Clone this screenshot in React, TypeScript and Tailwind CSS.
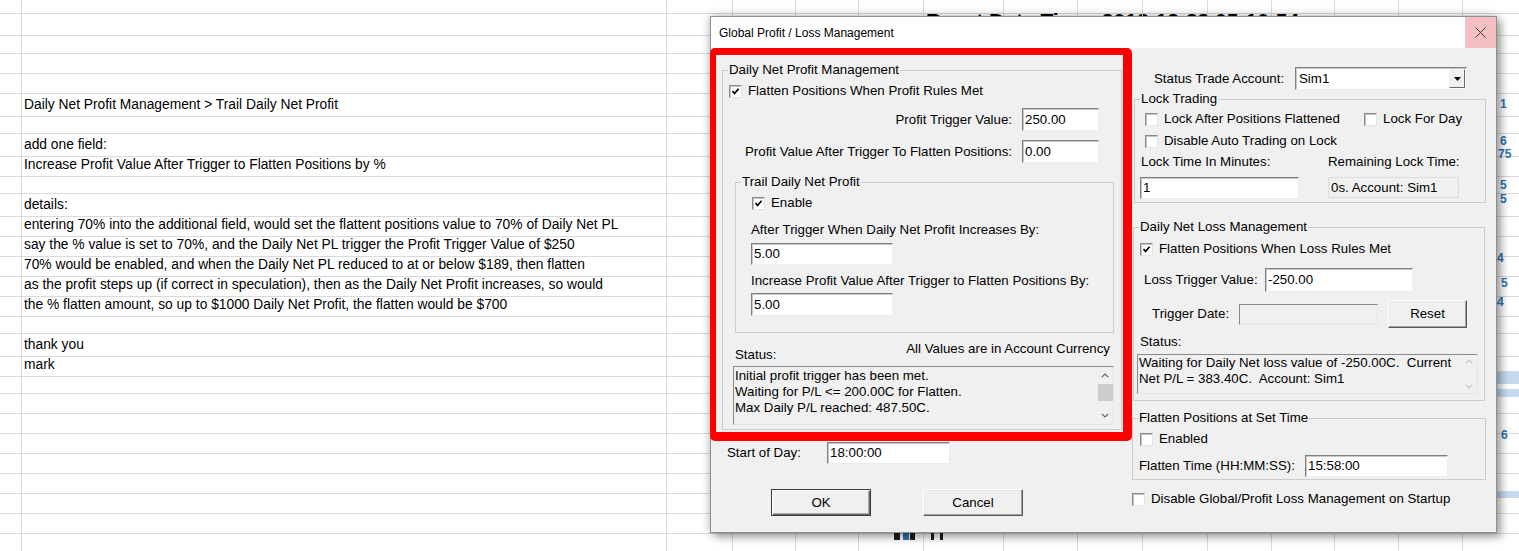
import React from 'react';

const sheetRows: Record<number, string> = {
  5: 'Daily Net Profit Management > Trail Daily Net Profit',
  7: 'add one field:',
  8: 'Increase Profit Value After Trigger to Flatten Positions by %',
  10: 'details:',
  11: 'entering 70% into the additional field, would set the flattent positions value to 70% of Daily Net PL',
  12: 'say the % value is set to 70%, and the Daily Net PL trigger the Profit Trigger Value of $250',
  13: '70% would be enabled, and when the Daily Net PL reduced to at or below $189, then flatten',
  14: 'as the profit steps up (if correct in speculation), then as the Daily Net Profit increases, so would',
  15: 'the % flatten amount, so up to $1000 Daily Net Profit, the flatten would be $700',
  17: 'thank you',
  18: 'mark',
};

// fragments of the window peeking out at the right edge
const edgeNumbers = [
  { top: 'top-[96px]', left: 'left-[1500px]', text: '1' },
  { top: 'top-[133px]', left: 'left-[1500px]', text: '6' },
  { top: 'top-[146px]', left: 'left-[1498px]', text: '75' },
  { top: 'top-[177px]', left: 'left-[1500px]', text: '5' },
  { top: 'top-[191px]', left: 'left-[1500px]', text: '5' },
  { top: 'top-[250px]', left: 'left-[1497px]', text: '4' },
  { top: 'top-[275px]', left: 'left-[1501px]', text: '5' },
  { top: 'top-[294px]', left: 'left-[1497px]', text: '4' },
  { top: 'top-[427px]', left: 'left-[1501px]', text: '6' },
];

function Check({ checked }: { checked?: boolean }) {
  return (
    <span className="inline-flex h-[13px] w-[13px] shrink-0 items-center justify-center border border-t-[#8a8a8a] border-l-[#8a8a8a] border-b-[#e4e4e4] border-r-[#e4e4e4] bg-white shadow-[inset_1px_1px_0_#c4c4c4]">
      {checked && (
        <svg width="9" height="9" viewBox="0 0 9 9">
          <path d="M1.5 4.2 L3.6 6.4 L7.6 1.8" stroke="#000" strokeWidth="1.7" fill="none" />
        </svg>
      )}
    </span>
  );
}

function CheckRow({ checked, label, className = '' }: { checked?: boolean; label: string; className?: string }) {
  return (
    <div className={'flex h-[16px] items-center gap-[6px] ' + className}>
      <Check checked={checked} />
      <span className="leading-[16px] whitespace-nowrap">{label}</span>
    </div>
  );
}

function Field({ value, className = '' }: { value: string; className?: string }) {
  return (
    <div className={'flex items-center border border-t-[#7f7f7f] border-l-[#7f7f7f] border-b-[#ececec] border-r-[#ececec] bg-white pl-[2px] leading-[16px] shadow-[inset_1px_1px_0_#c8c8c8] ' + className}>
      {value}
    </div>
  );
}

function GroupBox({ title, className = '', children }: { title: string; className?: string; children: React.ReactNode }) {
  return (
    <div className={'relative border border-[#cdcdcd] ' + className}>
      <span className="absolute -top-[9px] left-[5px] bg-[#f0f0f0] px-[1px] leading-[16px] whitespace-nowrap">{title}</span>
      {children}
    </div>
  );
}

function Button({ label, isDefault, className = '' }: { label: string; isDefault?: boolean; className?: string }) {
  const look = isDefault
    ? 'border border-[#3c3c3c] shadow-[inset_1px_1px_0_#ffffff,inset_-1px_-1px_0_#696969,inset_-2px_-2px_0_#a8a8a8]'
    : 'border border-t-[#ffffff] border-l-[#ffffff] border-b-[#5a5a5a] border-r-[#5a5a5a] shadow-[inset_-1px_-1px_0_#a0a0a0,inset_1px_1px_0_#e8e8e8]';
  return (
    <div className={'flex items-center justify-center bg-[#f0f0f0] ' + look + ' ' + className}>{label}</div>
  );
}

function Chevron({ up, color }: { up?: boolean; color: string }) {
  return (
    <svg width="8" height="5" viewBox="0 0 8 5">
      <path d={up ? 'M0.8 4.2 L4 1 L7.2 4.2' : 'M0.8 0.8 L4 4 L7.2 0.8'} stroke={color} strokeWidth="1.2" fill="none" />
    </svg>
  );
}

function Dialog() {
  return (
    <div className="absolute left-[710px] top-[16px] h-[517px] w-[787px] border border-[#8f8f8f] bg-white font-['Liberation_Sans',Arial,sans-serif] text-[13.3px] text-black shadow-[0_0_9px_rgba(0,0,0,0.3),5px_5px_8px_rgba(0,0,0,0.25)]">
      {/* Title bar */}
      <div className="flex h-[31px] items-center justify-between bg-white">
        <span className="pl-[8px] text-[12px]">Global Profit / Loss Management</span>
        <div className="flex h-[31px] w-[31px] items-center justify-center bg-[#f3bfc0]">
          <svg width="11" height="11" viewBox="0 0 11 11">
            <path d="M0.5 0.5 L10.5 10.5 M10.5 0.5 L0.5 10.5" stroke="#3a3a3a" strokeWidth="1" />
          </svg>
        </div>
      </div>

      <div className="flex h-[484px] bg-[#f0f0f0]">
        {/* Left column */}
        <div className="w-[420px] shrink-0">
          <GroupBox title="Daily Net Profit Management" className="ml-[11px] mt-[22px] w-[400px] pb-[4px]">
            <CheckRow checked label="Flatten Positions When Profit Rules Met" className="mt-[12px] pl-[6px]" />
            <div className="mt-[9px] flex items-center justify-end gap-[10px] pr-[22px]">
              <span>Profit Trigger Value:</span>
              <Field value="250.00" className="h-[23px] w-[77px]" />
            </div>
            <div className="mt-[9px] flex items-center justify-end gap-[10px] pr-[22px]">
              <span>Profit Value After Trigger To Flatten Positions:</span>
              <Field value="0.00" className="h-[23px] w-[77px]" />
            </div>

            <GroupBox title="Trail Daily Net Profit" className="ml-[12px] mt-[19px] h-[151px] w-[379px]">
              <CheckRow checked label="Enable" className="mt-[12px] pl-[16px]" />
              <div className="mt-[11px] pl-[15px] leading-[16px]">After Trigger When Daily Net Profit Increases By:</div>
              <Field value="5.00" className="ml-[15px] mt-[5px] h-[22px] w-[142px]" />
              <div className="mt-[8px] pl-[15px] leading-[16px]">Increase Profit Value After Trigger to Flatten Positions By:</div>
              <Field value="5.00" className="ml-[15px] mt-[4px] h-[23px] w-[142px]" />
            </GroupBox>

            <div className="mt-[8px] flex h-[22px] items-end justify-between pl-[12px] pr-[11px] leading-[16px]">
              <span>Status:</span>
              <span className="mb-[6px]">All Values are in Account Currency</span>
            </div>
            <div className="ml-[10px] mt-[3px] flex h-[59px] w-[381px] border border-t-[#8a8a8a] border-l-[#8a8a8a] border-b-[#e6e6e6] border-r-[#e6e6e6] bg-[#f0f0f0]">
              <div className="flex-1 pl-[1px] pt-[1px] leading-[16px]">
                <div>Initial profit trigger has been met.</div>
                <div>Waiting for P/L &lt;= 200.00C for Flatten.</div>
                <div>Max Daily P/L reached: 487.50C.</div>
              </div>
              <div className="flex w-[16px] flex-col items-center bg-[#f0f0f0]">
                <div className="flex h-[17px] items-center"><Chevron up color="#606060" /></div>
                <div className="h-[17px] w-[15px] bg-[#cdcdcd]" />
                <div className="flex-1" />
                <div className="flex h-[17px] items-center"><Chevron color="#606060" /></div>
              </div>
            </div>
          </GroupBox>

          <div className="mt-[12px] flex h-[22px] items-center pl-[16px]">
            <span className="w-[100px]">Start of Day:</span>
            <Field value="18:00:00" className="h-[22px] w-[123px]" />
          </div>
          <div className="mt-[25px] flex gap-[52px] pl-[60px]">
            <Button label="OK" isDefault className="h-[27px] w-[100px]" />
            <Button label="Cancel" className="h-[27px] w-[100px]" />
          </div>
        </div>

        {/* Right column */}
        <div className="flex-1">
          <div className="mt-[19px] flex h-[23px] items-center pl-[23px]">
            <span className="w-[141px]">Status Trade Account:</span>
            <div className="flex h-[23px] w-[172px] items-center border border-t-[#7f7f7f] border-l-[#7f7f7f] border-b-[#ececec] border-r-[#ececec] bg-white pl-[3px] shadow-[inset_1px_1px_0_#c8c8c8]">
              <span className="flex-1">Sim1</span>
              <div className="mr-[1px] flex h-[19px] w-[16px] items-center justify-center border border-t-[#f4f4f4] border-l-[#f4f4f4] border-b-[#696969] border-r-[#696969] bg-[#f0f0f0]">
                <svg width="7" height="4" viewBox="0 0 7 4"><path d="M0 0 H7 L3.5 4 Z" fill="#000" /></svg>
              </div>
            </div>
          </div>

          <GroupBox title="Lock Trading" className="ml-[3px] mt-[9px] h-[104px] w-[352px]">
            <div className="mt-[11px] flex pl-[10px]">
              <CheckRow label="Lock After Positions Flattened" className="w-[219px]" />
              <CheckRow label="Lock For Day" />
            </div>
            <CheckRow label="Disable Auto Trading on Lock" className="mt-[6px] pl-[10px]" />
            <div className="mt-[5px] flex pl-[6px] leading-[16px]">
              <span className="w-[187px]">Lock Time In Minutes:</span>
              <span>Remaining Lock Time:</span>
            </div>
            <div className="mt-[7px] flex items-start pl-[5px]">
              <Field value="1" className="h-[22px] w-[159px]" />
              <div className="ml-[29px] flex h-[21px] w-[131px] items-center border border-[#dcdcdc] bg-[#f0f0f0] pl-[2px]">0s. Account: Sim1</div>
            </div>
          </GroupBox>

          <GroupBox title="Daily Net Loss Management" className="ml-[2px] mt-[24px] w-[352px] pb-[6px]">
            <CheckRow checked label="Flatten Positions When Loss Rules Met" className="mt-[13px] pl-[6px]" />
            <div className="mt-[11px] flex items-center pl-[10px]">
              <span className="w-[121px]">Loss Trigger Value:</span>
              <Field value="-250.00" className="h-[24px] w-[148px]" />
            </div>
            <div className="mt-[8px] flex h-[28px] items-center pl-[18px]">
              <span className="w-[87px]">Trigger Date:</span>
              <div className="h-[21px] w-[139px] border border-t-[#8a8a8a] border-l-[#8a8a8a] border-b-[#e6e6e6] border-r-[#e6e6e6] bg-[#f0f0f0]" />
              <Button label="Reset" className="ml-[10px] h-[28px] w-[79px]" />
            </div>
            <div className="mt-[6px] pl-[6px] leading-[16px]">Status:</div>
            <div className="ml-[3px] mt-[4px] flex h-[40px] w-[341px] border border-t-[#8a8a8a] border-l-[#8a8a8a] border-b-[#e6e6e6] border-r-[#e6e6e6] bg-[#f0f0f0]">
              <div className="flex-1 whitespace-pre pl-[1px] leading-[16px]">
                <div>Waiting for Daily Net loss value of -250.00C.  Current</div>
                <div>Net P/L = 383.40C.  Account: Sim1</div>
              </div>
              <div className="flex w-[16px] flex-col items-center justify-between py-[4px]">
                <Chevron up color="#c2c2c2" />
                <Chevron color="#c2c2c2" />
              </div>
            </div>
          </GroupBox>

          <GroupBox title="Flatten Positions at Set Time" className="ml-[1px] mt-[17px] h-[62px] w-[354px]">
            <CheckRow label="Enabled" className="mt-[12px] pl-[7px]" />
            <div className="mt-[8px] flex items-center pl-[6px]">
              <span className="w-[166px]">Flatten Time (HH:MM:SS):</span>
              <Field value="15:58:00" className="h-[22px] w-[143px]" />
            </div>
          </GroupBox>

          <CheckRow label="Disable Global/Profit Loss Management on Startup" className="mt-[11px] pl-[1px]" />
        </div>
      </div>

      {/* red annotation box drawn over the dialog */}
      <div className="pointer-events-none absolute -left-[1px] top-[31px] h-[393px] w-[422px] rounded-[5px] border-[#ff0000] border-t-[7px] border-r-[9px] border-b-[9px] border-l-[6px]" />
    </div>
  );
}

export default function App() {
  const rowIndexes = Array.from({ length: 28 }, (_, i) => i);
  return (
    <div className="relative h-[551px] w-[1519px] overflow-hidden bg-white font-['Liberation_Sans',Arial,sans-serif] text-[13.8px] text-black">
      {/* Spreadsheet grid */}
      <div>
        {rowIndexes.map((r) => (
          <div
            key={r}
            className={
              'grid grid-cols-[22px_645px_66px_63px_63px_65px_80px_74px_65px_65px_64px_63px_64px_64px_68px] ' +
              (r === 0 ? 'h-[14px]' : 'h-[20px]')
            }
          >
            {Array.from({ length: 15 }, (_, c) => (
              <div key={c} className="border-b border-r border-[#dadada] whitespace-nowrap">
                {c === 1 && sheetRows[r] && <span className="block pl-[2px] leading-[22px]">{sheetRows[r]}</span>}
                {c === 6 && r === 1 && (
                  <span className="pl-[2px] text-[21px] font-bold leading-[14px]">Reset Date  Time: 2018-12-28  05:10:54</span>
                )}
              </div>
            ))}
          </div>
        ))}
      </div>

      {/* pieces of the window behind the dialog */}
      <div className="absolute left-[1496px] top-[371px] h-[13px] w-[23px] bg-[#c6d9ee]" />
      <div className="absolute left-[1496px] top-[389px] h-[8px] w-[23px] bg-[#c6d9ee]" />
      <div className="absolute left-[1496px] top-[491px] h-[7px] w-[23px] bg-[#c6d9ee]" />
      {edgeNumbers.map((n, i) => (
        <span key={i} className={'absolute text-[12px] font-bold leading-[16px] text-[#2e74b5] ' + n.top + ' ' + n.left}>
          {n.text}
        </span>
      ))}
      <div className="absolute left-[894px] top-[532px] h-[8px] w-[6px] bg-[#1e1e1e]" />
      <div className="absolute left-[903px] top-[532px] h-[8px] w-[6px] bg-[#2f6fb3]" />
      <div className="absolute left-[910px] top-[532px] h-[8px] w-[5px] bg-[#1e1e1e]" />
      <div className="absolute left-[931px] top-[532px] h-[8px] w-[3px] bg-[#1e1e1e]" />
      <div className="absolute left-[940px] top-[532px] h-[8px] w-[3px] bg-[#1e1e1e]" />

      <Dialog />
    </div>
  );
}
